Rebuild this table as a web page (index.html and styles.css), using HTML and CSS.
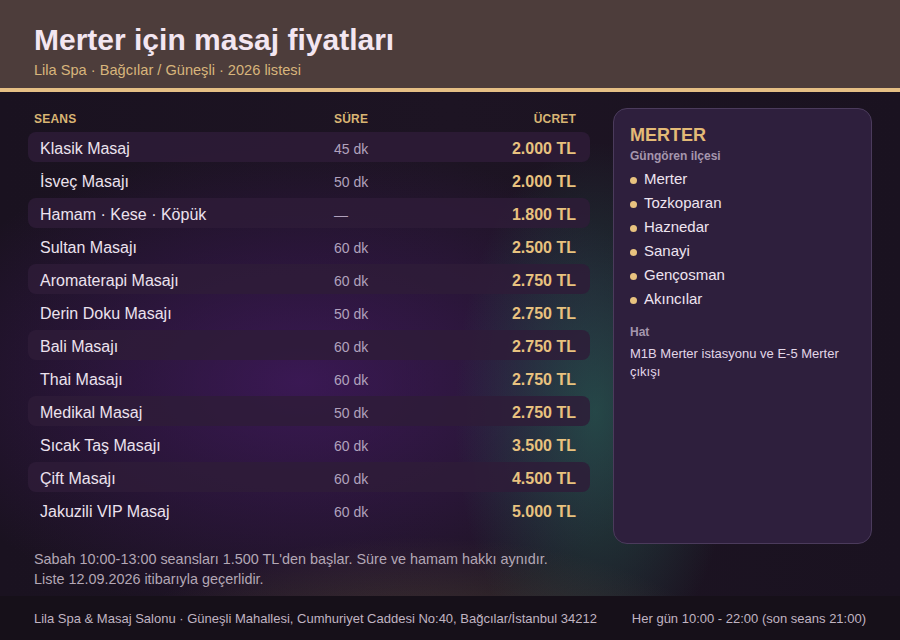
FILE: index.html
```html
<!DOCTYPE html>
<html lang="tr">
<head>
<meta charset="utf-8">
<title>Merter için masaj fiyatları</title>
<link rel="stylesheet" href="styles.css">
</head>
<body>
<header class="top">
  <h1 class="title">Merter için masaj fiyatları</h1>
  <p class="subtitle">Lila Spa · Bağcılar / Güneşli · 2026 listesi</p>
</header>
<main class="main">
  <div class="grid">
    <section class="table">
      <div class="thead">
        <span>SEANS</span><span>SÜRE</span><span class="right">ÜCRET</span>
      </div>
      <div class="row alt"><span class="name">Klasik Masaj</span><span class="dur">45 dk</span><span class="price">2.000 TL</span></div>
      <div class="row"><span class="name">İsveç Masajı</span><span class="dur">50 dk</span><span class="price">2.000 TL</span></div>
      <div class="row alt"><span class="name">Hamam · Kese · Köpük</span><span class="dur">—</span><span class="price">1.800 TL</span></div>
      <div class="row"><span class="name">Sultan Masajı</span><span class="dur">60 dk</span><span class="price">2.500 TL</span></div>
      <div class="row alt"><span class="name">Aromaterapi Masajı</span><span class="dur">60 dk</span><span class="price">2.750 TL</span></div>
      <div class="row"><span class="name">Derin Doku Masajı</span><span class="dur">50 dk</span><span class="price">2.750 TL</span></div>
      <div class="row alt"><span class="name">Bali Masajı</span><span class="dur">60 dk</span><span class="price">2.750 TL</span></div>
      <div class="row"><span class="name">Thai Masajı</span><span class="dur">60 dk</span><span class="price">2.750 TL</span></div>
      <div class="row alt"><span class="name">Medikal Masaj</span><span class="dur">50 dk</span><span class="price">2.750 TL</span></div>
      <div class="row"><span class="name">Sıcak Taş Masajı</span><span class="dur">60 dk</span><span class="price">3.500 TL</span></div>
      <div class="row alt"><span class="name">Çift Masajı</span><span class="dur">60 dk</span><span class="price">4.500 TL</span></div>
      <div class="row"><span class="name">Jakuzili VIP Masaj</span><span class="dur">60 dk</span><span class="price">5.000 TL</span></div>
    </section>
    <aside class="card">
      <h2 class="card-title">MERTER</h2>
      <p class="card-sub">Güngören ilçesi</p>
      <ul class="hoods">
        <li>Merter</li>
        <li>Tozkoparan</li>
        <li>Haznedar</li>
        <li>Sanayi</li>
        <li>Gençosman</li>
        <li>Akıncılar</li>
      </ul>
      <p class="card-label">Hat</p>
      <p class="card-text">M1B Merter istasyonu ve E-5 Merter çıkışı</p>
    </aside>
  </div>
  <div class="notes">
    <p>Sabah 10:00-13:00 seansları 1.500 TL'den başlar. Süre ve hamam hakkı aynıdır.</p>
    <p>Liste 12.09.2026 itibarıyla geçerlidir.</p>
  </div>
</main>
<footer class="bottom">
  <span>Lila Spa &amp; Masaj Salonu · Güneşli Mahallesi, Cumhuriyet Caddesi No:40, Bağcılar/İstanbul 34212</span>
  <span>Her gün 10:00 - 22:00 (son seans 21:00)</span>
</footer>
</body>
</html>
```
FILE: styles.css
```css
* { box-sizing: border-box; }
html, body { margin: 0; padding: 0; }
body {
  width: 900px;
  height: 640px;
  display: flex;
  flex-direction: column;
  font-family: "Liberation Sans", Arial, sans-serif;
  background: #1a1220;
  overflow: hidden;
}
p, h1, h2, ul { margin: 0; padding: 0; }

.top {
  height: 92px;
  padding: 23px 34px 0;
  background: #4d3d3b;
  border-bottom: 4px solid #e5bf85;
}
.title {
  font-size: 30px;
  line-height: 34px;
  font-weight: 700;
  color: #f3e6f1;
}
.subtitle {
  margin-top: 4px;
  font-size: 14.6px;
  line-height: 18px;
  color: #d8b57c;
}

.main {
  flex: 1;
  display: flex;
  flex-direction: column;
  padding: 16px 28px 0;
  background:
    radial-gradient(ellipse 320px 140px at 420px 585px, rgba(98, 82, 62, 0.65), rgba(98, 82, 62, 0) 100%),
    radial-gradient(ellipse 140px 270px at 595px 320px, rgba(38, 92, 82, 0.7), rgba(38, 92, 82, 0) 100%),
    radial-gradient(ellipse 400px 240px at 300px 290px, rgba(68, 26, 100, 0.75), rgba(68, 26, 100, 0) 100%),
    linear-gradient(90deg, #1a1220 0%, #1d1423 50%, #1a1220 100%);
}
.grid {
  display: grid;
  grid-template-columns: 562px 1fr;
  column-gap: 23px;
}
.table {
  padding-bottom: 19px;
}
.thead {
  display: grid;
  grid-template-columns: 300px 1fr auto;
  height: 24px;
  padding: 4px 14px 6px 6px;
  font-size: 12px;
  line-height: 14px;
  font-weight: 700;
  color: #d9b574;
  letter-spacing: 0.2px;
}
.right { text-align: right; }
.row {
  display: grid;
  grid-template-columns: 294px 1fr auto;
  align-items: center;
  height: 30px;
  padding: 4px 14px 0 12px;
  border-radius: 8px;
}
.row + .row { margin-top: 3px; }
.row.alt { background: rgba(46, 28, 56, 0.82); }
.name {
  font-size: 16px;
  color: #ece2ee;
}
.dur {
  font-size: 14px;
  color: #b1a2bd;
}
.price {
  font-size: 16px;
  font-weight: 700;
  color: #e8c27f;
  text-align: right;
}

.card {
  background: #2e1f3d;
  border: 1px solid #4b3b5c;
  border-radius: 14px;
  padding: 15px 16px 16px;
}
.card-title {
  font-size: 18px;
  line-height: 22px;
  font-weight: 700;
  color: #e3ba77;
}
.card-sub {
  margin-top: 2px;
  font-size: 12px;
  line-height: 16px;
  font-weight: 700;
  color: #a596ad;
}
.hoods {
  list-style: none;
  margin-top: 3px;
}
.hoods li {
  display: flex;
  align-items: center;
  gap: 7px;
  font-size: 15px;
  line-height: 24px;
  color: #eee4f0;
}
.hoods li::before {
  content: "";
  width: 7px;
  height: 7px;
  border-radius: 50%;
  background: #e8c27f;
  margin-top: 3px;
}
.card-label {
  margin-top: 13px;
  font-size: 12px;
  line-height: 16px;
  font-weight: 700;
  color: #a596ad;
}
.card-text {
  margin-top: 5px;
  font-size: 13px;
  line-height: 18px;
  color: #e2d6e8;
}

.notes {
  margin-top: 5px;
  padding-left: 6px;
  font-size: 14.4px;
  line-height: 20px;
  color: #b3a7b5;
}

.bottom {
  height: 44px;
  flex: none;
  display: flex;
  justify-content: space-between;
  align-items: center;
  padding: 0 34px;
  background: #161019;
  font-size: 13px;
  color: #c0b4c2;
}
```
